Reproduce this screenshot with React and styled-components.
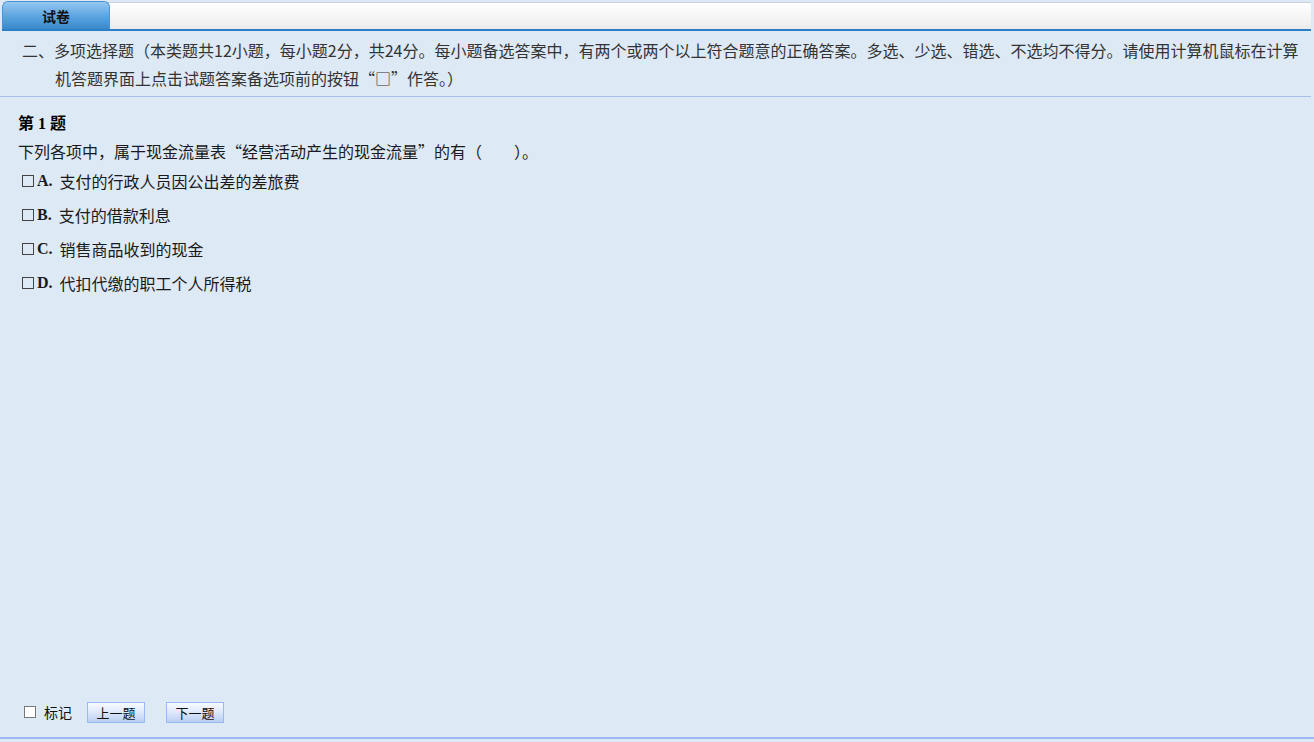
import React from "react";
import styled, { createGlobalStyle } from "styled-components";

const Global = createGlobalStyle`
  html, body { margin: 0; padding: 0; background: #dde9f5; }
  body { font-family: "Noto Sans CJK SC", "Noto Sans", sans-serif; }
  * { box-sizing: border-box; }
`;

const Page = styled.div`
  height: 742px;
  display: flex;
  flex-direction: column;
  background: #dde9f5;
  overflow: hidden;
`;

const TabBar = styled.div`
  display: flex;
  align-items: flex-end;
  margin: 2px 3px 0 2px;
  height: 29px;
  border-bottom: 2px solid #2c7fc4;
  background: linear-gradient(#ffffff, #ececec);
  border-top: 1px solid #c9d2de;
`;

const Tab = styled.div`
  width: 108px;
  height: 28px;
  margin-top: -1px;
  border-radius: 6px 6px 0 0;
  border: 1px solid #4a94d2;
  border-bottom: none;
  background: linear-gradient(#94c8f0, #5aa3df 55%, #3a88cc);
  display: flex;
  align-items: center;
  justify-content: center;
  font-size: 14px;
  font-weight: bold;
  color: #111;
`;

const Instructions = styled.div`
  padding: 5px 10px 4px 55px;
  text-indent: -33px;
  font-size: 16px;
  line-height: 28px;
  color: #333;
  border-bottom: 1px solid #a9c0e6;
  margin: 0 3px 0 0;
`;

const Content = styled.div`
  flex: 1;
  padding: 14px 18px 0 18px;
  color: #1a1a1a;
`;

const QTitle = styled.div`
  font-family: "Liberation Serif", "Noto Sans CJK SC", serif;
  font-weight: bold;
  font-size: 16px;
  line-height: 26px;
  color: #000;
`;

const QText = styled.div`
  font-size: 16px;
  line-height: 26px;
  margin-top: 1px;
`;

const Options = styled.div`
  display: flex;
  flex-direction: column;
  gap: 8px;
  margin-top: 4px;
  padding-left: 4px;
`;

const Option = styled.label`
  display: flex;
  align-items: center;
  font-size: 16px;
  line-height: 26px;
`;

const Box = styled.span`
  display: inline-block;
  width: 12px;
  height: 12px;
  border: 1px solid ${(p) => (p.$gray ? "#777" : "#444")};
  background: ${(p) => (p.$gray ? "#fff" : "transparent")};
  margin-right: ${(p) => p.$gap || 3}px;
`;

const Letter = styled.span`
  font-family: "Liberation Serif", serif;
  font-weight: bold;
  font-size: 16px;
  margin-right: 7px;
`;

const Footer = styled.div`
  display: flex;
  align-items: center;
  padding: 0 0 12px 24px;
  height: 40px;
  border-bottom: 2px solid #9db7f2;
  margin-bottom: 3px;
`;

const Mark = styled.label`
  display: flex;
  align-items: center;
  font-size: 14px;
  color: #111;
  margin-right: 15px;
`;

const Btn = styled.button`
  width: 58px;
  height: 21px;
  padding: 0;
  border: 1px solid #9ab8f4;
  background: linear-gradient(#f8fbff, #dde8fb 50%, #b9cff2);
  font-family: "Noto Sans CJK SC", sans-serif;
  font-size: 13px;
  color: #111;
  margin-right: ${(p) => p.$mr || 0}px;
`;

const options = [
  ["A.", "支付的行政人员因公出差的差旅费"],
  ["B.", "支付的借款利息"],
  ["C.", "销售商品收到的现金"],
  ["D.", "代扣代缴的职工个人所得税"],
];

export default function App() {
  return (
    <Page>
      <Global />
      <TabBar>
        <Tab>试卷</Tab>
      </TabBar>
      <Instructions>
        二、多项选择题（本类题共12小题，每小题2分，共24分。每小题备选答案中，有两个或两个以上符合题意的正确答案。多选、少选、错选、不选均不得分。请使用计算机鼠标在计算机答题界面上点击试题答案备选项前的按钮“□”作答。）
      </Instructions>
      <Content>
        <QTitle>第 1 题</QTitle>
        <QText>下列各项中，属于现金流量表“经营活动产生的现金流量”的有（　　）。</QText>
        <Options>
          {options.map(([l, t]) => (
            <Option key={l}>
              <Box />
              <Letter>{l}</Letter>
              {t}
            </Option>
          ))}
        </Options>
      </Content>
      <Footer>
        <Mark>
          <Box $gray $gap={8} />
          标记
        </Mark>
        <Btn $mr={21}>上一题</Btn>
        <Btn>下一题</Btn>
      </Footer>
    </Page>
  );
}
